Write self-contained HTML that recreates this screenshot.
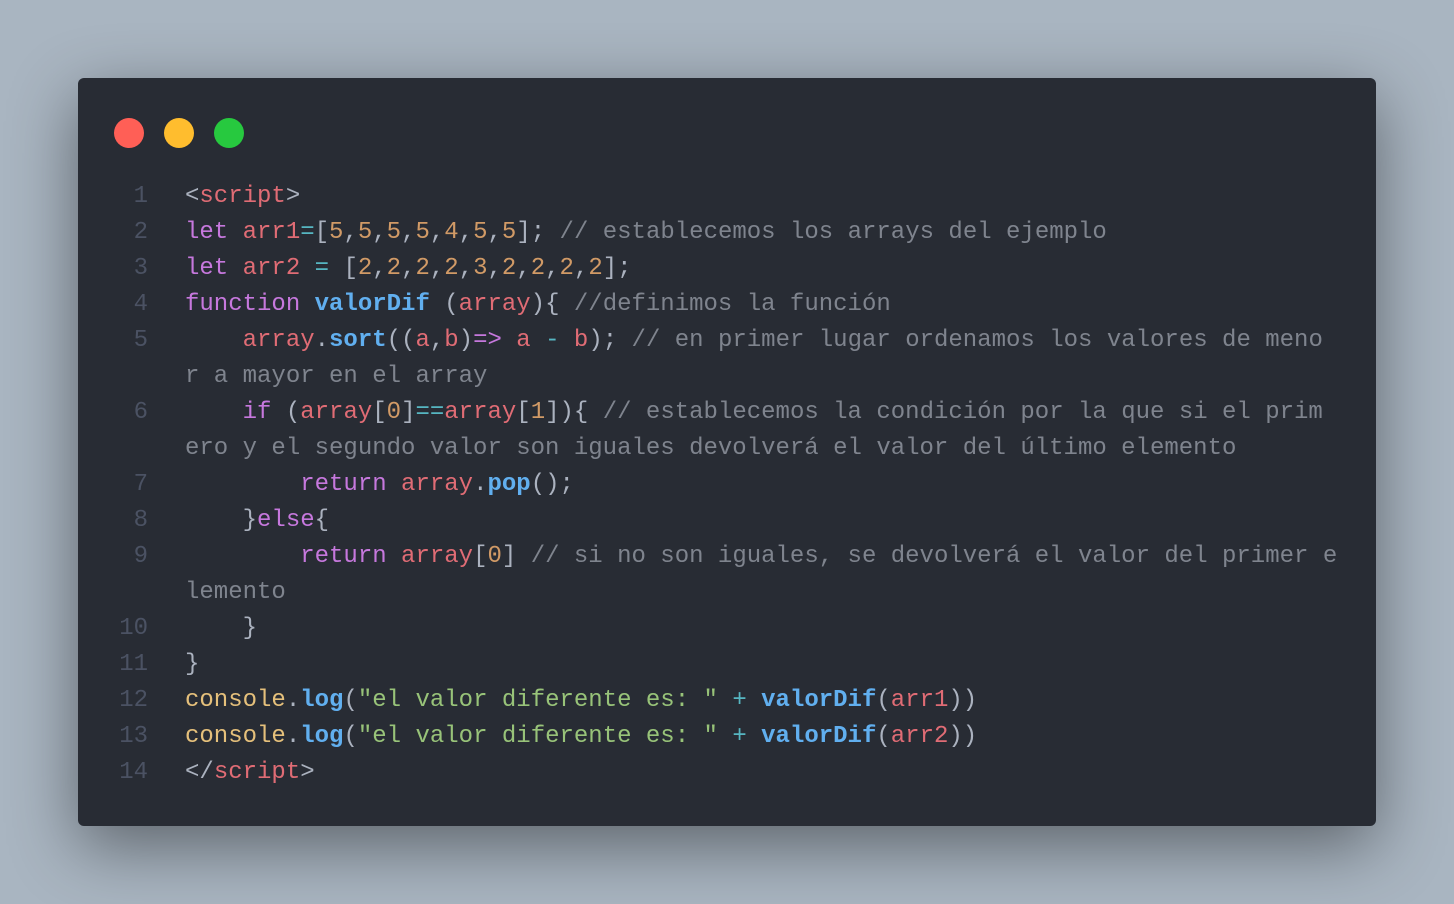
<!DOCTYPE html>
<html><head><meta charset="utf-8"><style>
html,body{margin:0;padding:0;}
body{width:1454px;height:904px;background:#a9b5c1;position:relative;overflow:hidden;font-family:"Liberation Mono",monospace;}
.win{position:absolute;left:78px;top:78px;width:1298px;height:748px;background:#282c34;border-radius:6px;box-shadow:0 20px 68px rgba(0,0,0,.45);}
.dot{position:absolute;top:40px;width:30px;height:30px;border-radius:50%;}
.code{position:absolute;left:0;top:101px;font-size:24px;line-height:36px;color:#abb2bf;}
.r{display:flex;height:36px;white-space:pre;}
.n{width:70px;text-align:right;color:#4b5263;padding-right:37px;flex:none;}
.k{color:#c678dd}.v{color:#e06c75}.o{color:#d19a66}.f{color:#61afef;font-weight:bold}.c{color:#7f848e}.y{color:#e5c07b}.s{color:#98c379}.p{color:#56b6c2}
</style></head><body>
<div class="win">
<div class="dot" style="left:36px;background:#ff5f56"></div>
<div class="dot" style="left:86px;background:#ffbd2e"></div>
<div class="dot" style="left:136px;background:#27c93f"></div>
<div class="code">
<div class="r"><span class="n">1</span><span>&lt;<span class="v">script</span>&gt;</span></div>
<div class="r"><span class="n">2</span><span><span class="k">let</span> <span class="v">arr1</span><span class="p">=</span>[<span class="o">5</span>,<span class="o">5</span>,<span class="o">5</span>,<span class="o">5</span>,<span class="o">4</span>,<span class="o">5</span>,<span class="o">5</span>]; <span class="c">// establecemos los arrays del ejemplo</span></span></div>
<div class="r"><span class="n">3</span><span><span class="k">let</span> <span class="v">arr2</span> <span class="p">=</span> [<span class="o">2</span>,<span class="o">2</span>,<span class="o">2</span>,<span class="o">2</span>,<span class="o">3</span>,<span class="o">2</span>,<span class="o">2</span>,<span class="o">2</span>,<span class="o">2</span>];</span></div>
<div class="r"><span class="n">4</span><span><span class="k">function</span> <span class="f">valorDif</span> (<span class="v">array</span>){ <span class="c">//definimos la función</span></span></div>
<div class="r"><span class="n">5</span><span>    <span class="v">array</span>.<span class="f">sort</span>((<span class="v">a</span>,<span class="v">b</span>)<span class="k">=&gt;</span> <span class="v">a</span> <span class="p">-</span> <span class="v">b</span>); <span class="c">// en primer lugar ordenamos los valores de meno</span></span></div>
<div class="r"><span class="n"></span><span class="c">r a mayor en el array</span></div>
<div class="r"><span class="n">6</span><span>    <span class="k">if</span> (<span class="v">array</span>[<span class="o">0</span>]<span class="p">==</span><span class="v">array</span>[<span class="o">1</span>]){ <span class="c">// establecemos la condición por la que si el prim</span></span></div>
<div class="r"><span class="n"></span><span class="c">ero y el segundo valor son iguales devolverá el valor del último elemento</span></div>
<div class="r"><span class="n">7</span><span>        <span class="k">return</span> <span class="v">array</span>.<span class="f">pop</span>();</span></div>
<div class="r"><span class="n">8</span><span>    }<span class="k">else</span>{</span></div>
<div class="r"><span class="n">9</span><span>        <span class="k">return</span> <span class="v">array</span>[<span class="o">0</span>] <span class="c">// si no son iguales, se devolverá el valor del primer e</span></span></div>
<div class="r"><span class="n"></span><span class="c">lemento</span></div>
<div class="r"><span class="n">10</span><span>    }</span></div>
<div class="r"><span class="n">11</span><span>}</span></div>
<div class="r"><span class="n">12</span><span><span class="y">console</span>.<span class="f">log</span>(<span class="s">"el valor diferente es: "</span> <span class="p">+</span> <span class="f">valorDif</span>(<span class="v">arr1</span>))</span></div>
<div class="r"><span class="n">13</span><span><span class="y">console</span>.<span class="f">log</span>(<span class="s">"el valor diferente es: "</span> <span class="p">+</span> <span class="f">valorDif</span>(<span class="v">arr2</span>))</span></div>
<div class="r"><span class="n">14</span><span>&lt;/<span class="v">script</span>&gt;</span></div>
</div>
</div>
</body></html>
